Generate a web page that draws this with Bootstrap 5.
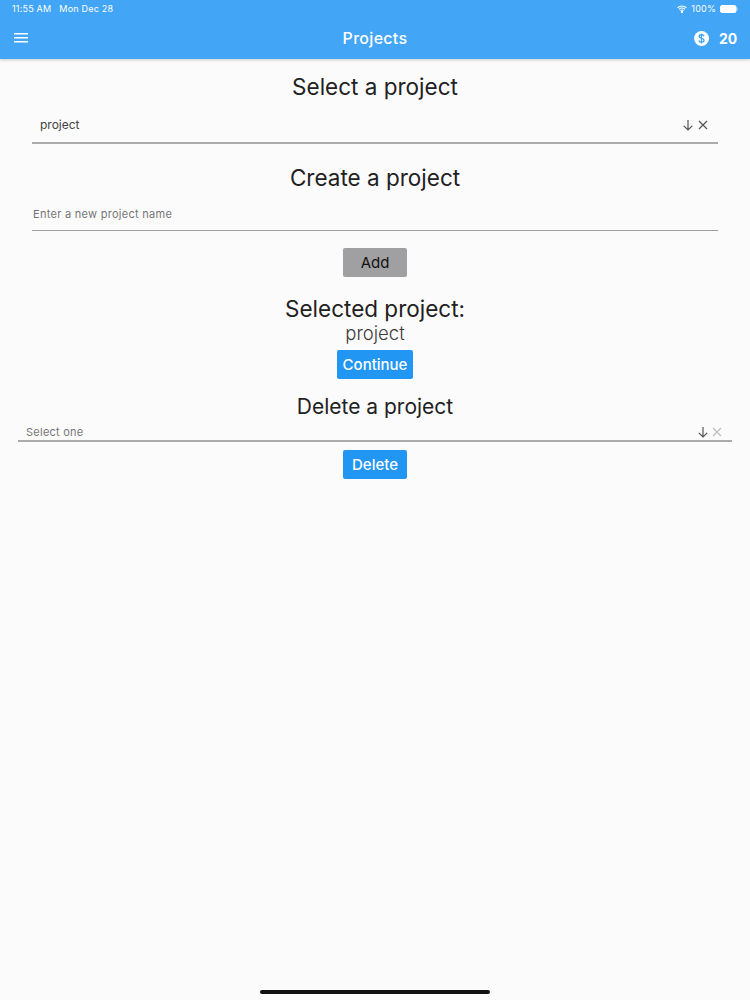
<!DOCTYPE html>
<html lang="en">
<head>
    <meta charset="UTF-8">
    <title>Projects</title>
    <link href="https://cdn.jsdelivr.net/npm/bootstrap@5.3.0/dist/css/bootstrap.min.css" rel="stylesheet">
    <style>
        body { background: #fcfbfc; font-family: Inter, Roboto, sans-serif; color: #212121; height: 1000px; overflow: hidden; }
        .app-bar { background: #42a5f5; height: 59px; box-shadow: 0 1px 3px rgba(0,0,0,.2); color: #fff; }
        .status-row { height: 17px; padding: 0 12px; font-size: 9px; letter-spacing: .2px; }
        .tool-row { height: 42px; padding: 0 14px; }
        .bar-side { flex: 1 1 0; }
        .app-title { font-size: 16px; font-weight: 500; letter-spacing: .3px; }
        .coin-wrap { gap: 10px; }
        .coin-count { font-size: 14px; font-weight: 700; width: 17px; }
        .h-select { font-size: 22.5px; line-height: 30px; padding-top: 13px; height: 43px; }
        .pick-row { height: 42px; margin: 0 32px; border-bottom: 2px solid #ababab; padding: 2px 9px 0 8px; font-size: 12px; color: #424242; }
        .pick-icons { gap: 3px; }
        .h-create { font-size: 22.5px; line-height: 30px; margin-top: 19px; }
        .name-row { height: 38px; margin: 0 32px; border-bottom: 1px solid #9e9e9e; font-size: 11px; color: #757575; letter-spacing: .28px; padding-top: 13px; padding-left: 1px; }
        .flat-btn { border: 0; border-radius: 2px; height: 29px; font-size: 15px; font-weight: 500; padding: 0; line-height: 29px; }
        .btn-add { width: 64px; background: #a09fa1; color: #111; font-weight: 400; margin-top: 17px; }
        .btn-go { background: #2196f3; color: #fff; width: 64px; }
        .btn-continue { width: 76px; }
        .h-selected { font-size: 22.5px; line-height: 30px; margin-top: 17px; margin-bottom: -3px; }
        .sel-name { font-size: 18.5px; line-height: 24px; font-weight: 300; color: #3a3a3a; margin-bottom: 5px; }
        .h-delete { font-size: 21px; line-height: 28px; margin-top: 14px; }
        .del-row { height: 21px; margin: 0 18px; border-bottom: 2px solid #ababab; padding: 3px 9px 0 8px; font-size: 11px; color: #757575; letter-spacing: .25px; }
        .del-row .pick-icons { gap: 2px; }
        .home-bar { width: 230px; height: 4px; border-radius: 2px; background: #111; bottom: 6px; left: 260px; }
    </style>
</head>
<body class="position-relative">
<header class="app-bar">
    <div class="status-row d-flex justify-content-between align-items-center">
        <span class="d-flex gap-2"><span>11:55 AM</span><span>Mon Dec 28</span></span>
        <span class="d-flex align-items-center gap-1">
            <svg width="10" height="8" viewBox="0 0 10 8" fill="none" stroke="#fff" stroke-width="1.1"><path d="M.5 2.800a6.400 6.400 0 0 1 9 0M2 4.300a4.200 4.200 0 0 1 6 0M3.400 5.700a2.200 2.200 0 0 1 3.200 0"/><circle cx="5" cy="7" r=".6" fill="#fff"/></svg>
            <span>100%</span>
            <svg width="18" height="8" viewBox="0 0 18 8"><rect x=".5" y=".5" width="15.500" height="7" rx="1.500" fill="#fff" stroke="#fff"/><rect x="16.600" y="2.700" width="1" height="2.600" fill="#fff" opacity=".6"/></svg>
        </span>
    </div>
    <div class="tool-row d-flex align-items-center">
        <span class="bar-side d-flex">
            <svg width="14" height="12" viewBox="0 0 14 12" fill="#fff"><rect y="1" width="14" height="1.500"/><rect y="5" width="14" height="1.500"/><rect y="9" width="14" height="1.500"/></svg>
        </span>
        <span class="app-title">Projects</span>
        <span class="bar-side d-flex justify-content-end align-items-center coin-wrap">
            <svg width="15" height="15" viewBox="0 0 16 16"><circle cx="8" cy="8" r="8" fill="#fff"/><path d="M10.700 5.600C10.400 4.600 9.400 4 8 4 6.500 4 5.500 4.800 5.500 5.900c0 2.500 5.200 1.300 5.200 4 0 1.200-1.100 2-2.700 2-1.500 0-2.500-.7-2.800-1.800M8 2.700v10.600" fill="none" stroke="#42a5f5" stroke-width="1.400"/></svg>
            <span class="coin-count">20</span>
        </span>
    </div>
</header>

<main class="text-center">
    <div class="h-select">Select a project</div>
    <div class="pick-row d-flex justify-content-between align-items-center">
        <span class="mt-1">project</span>
        <span class="d-flex align-items-center pick-icons mt-1">
            <svg width="12" height="12" viewBox="0 0 12 12" fill="none" stroke="#555" stroke-width="1.200"><path d="M6 1v10M1.800 6.800 6 11l4.200-4.200"/></svg>
            <svg width="12" height="12" viewBox="0 0 12 12" fill="none" stroke="#555" stroke-width="1.200"><path d="m2 2 8 8M10 2l-8 8"/></svg>
        </span>
    </div>

    <div class="h-create">Create a project</div>
    <div class="name-row text-start">Enter a new project name</div>
    <button class="flat-btn btn-add" type="button">Add</button>

    <div class="h-selected">Selected project:</div>
    <div class="sel-name">project</div>
    <button class="flat-btn btn-go btn-continue" type="button">Continue</button>

    <div class="h-delete">Delete a project</div>
    <div class="del-row d-flex justify-content-between align-items-center">
        <span>Select one</span>
        <span class="d-flex align-items-center pick-icons">
            <svg width="12" height="12" viewBox="0 0 12 12" fill="none" stroke="#555" stroke-width="1.200"><path d="M6 1v10M1.800 6.800 6 11l4.200-4.200"/></svg>
            <svg width="12" height="12" viewBox="0 0 12 12" fill="none" stroke="#bdbdbd" stroke-width="1.200"><path d="m2 2 8 8M10 2l-8 8"/></svg>
        </span>
    </div>
    <button class="flat-btn btn-go mt-2" type="button">Delete</button>
</main>

<div class="home-bar position-absolute"></div>
</body>
</html>
